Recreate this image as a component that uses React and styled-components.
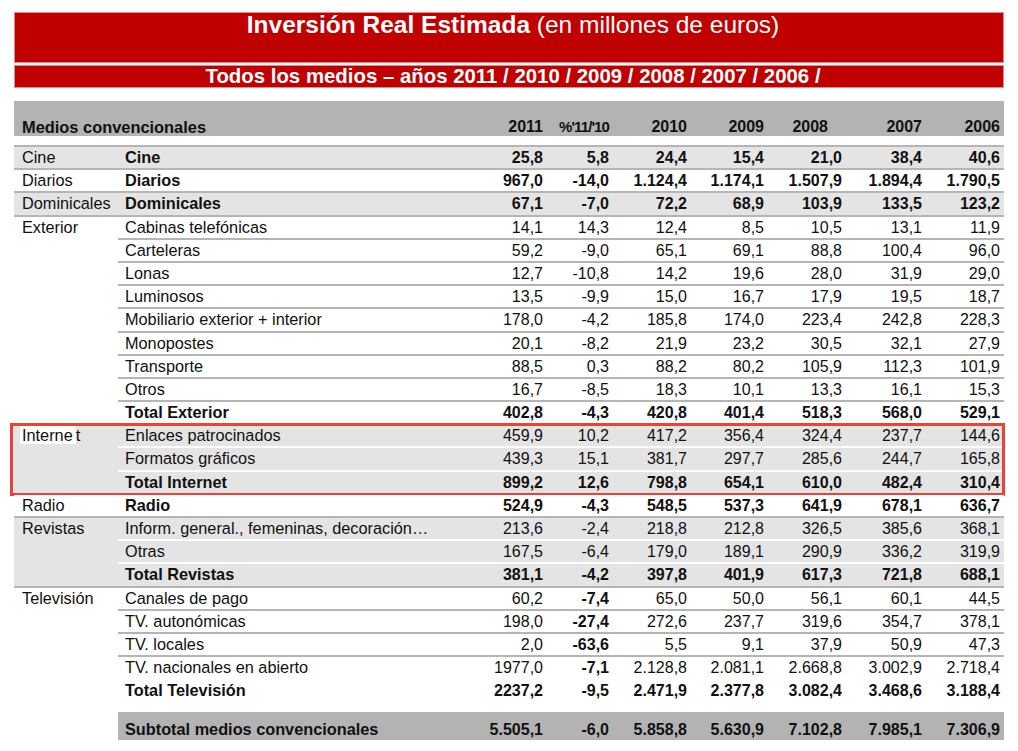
import React from 'react';
import styled, { createGlobalStyle } from 'styled-components';

const colors = {
    RED: '#c00000',
    HIGHLIGHT: '#ee4136',
    BAND: '#b3b3b3',
    SHADE: '#e4e4e4',
    LINE: '#b5b5b5',
    WHITE: '#ffffff',
    TEXT: '#111111',
};

const years = ['2011', "%'11/'10", '2010', '2009', '2008', '2007', '2006'];

const groups = [
    { cat: 'Cine', shade: true, rows: [{ name: 'Cine', bold: true, v: ['25,8', '5,8', '24,4', '15,4', '21,0', '38,4', '40,6'] }] },
    { cat: 'Diarios', rows: [{ name: 'Diarios', bold: true, v: ['967,0', '-14,0', '1.124,4', '1.174,1', '1.507,9', '1.894,4', '1.790,5'] }] },
    { cat: 'Dominicales', shade: true, rows: [{ name: 'Dominicales', bold: true, v: ['67,1', '-7,0', '72,2', '68,9', '103,9', '133,5', '123,2'] }] },
    {
        cat: 'Exterior', rows: [
            { name: 'Cabinas telefónicas', v: ['14,1', '14,3', '12,4', '8,5', '10,5', '13,1', '11,9'] },
            { name: 'Carteleras', v: ['59,2', '-9,0', '65,1', '69,1', '88,8', '100,4', '96,0'] },
            { name: 'Lonas', v: ['12,7', '-10,8', '14,2', '19,6', '28,0', '31,9', '29,0'] },
            { name: 'Luminosos', v: ['13,5', '-9,9', '15,0', '16,7', '17,9', '19,5', '18,7'] },
            { name: 'Mobiliario exterior + interior', v: ['178,0', '-4,2', '185,8', '174,0', '223,4', '242,8', '228,3'] },
            { name: 'Monopostes', v: ['20,1', '-8,2', '21,9', '23,2', '30,5', '32,1', '27,9'] },
            { name: 'Transporte', v: ['88,5', '0,3', '88,2', '80,2', '105,9', '112,3', '101,9'] },
            { name: 'Otros', v: ['16,7', '-8,5', '18,3', '10,1', '13,3', '16,1', '15,3'] },
            { name: 'Total Exterior', bold: true, v: ['402,8', '-4,3', '420,8', '401,4', '518,3', '568,0', '529,1'] },
        ]
    },
    {
        cat: 'Internet', shade: true, marked: true, rows: [
            { name: 'Enlaces patrocinados', v: ['459,9', '10,2', '417,2', '356,4', '324,4', '237,7', '144,6'] },
            { name: 'Formatos gráficos', v: ['439,3', '15,1', '381,7', '297,7', '285,6', '244,7', '165,8'] },
            { name: 'Total Internet', bold: true, v: ['899,2', '12,6', '798,8', '654,1', '610,0', '482,4', '310,4'] },
        ]
    },
    { cat: 'Radio', rows: [{ name: 'Radio', bold: true, v: ['524,9', '-4,3', '548,5', '537,3', '641,9', '678,1', '636,7'] }] },
    {
        cat: 'Revistas', shade: true, rows: [
            { name: 'Inform. general., femeninas, decoración…', v: ['213,6', '-2,4', '218,8', '212,8', '326,5', '385,6', '368,1'] },
            { name: 'Otras', v: ['167,5', '-6,4', '179,0', '189,1', '290,9', '336,2', '319,9'] },
            { name: 'Total Revistas', bold: true, v: ['381,1', '-4,2', '397,8', '401,9', '617,3', '721,8', '688,1'] },
        ]
    },
    {
        cat: 'Televisión', open: true, rows: [
            { name: 'Canales de pago', boldPct: true, v: ['60,2', '-7,4', '65,0', '50,0', '56,1', '60,1', '44,5'] },
            { name: 'TV. autonómicas', boldPct: true, v: ['198,0', '-27,4', '272,6', '237,7', '319,6', '354,7', '378,1'] },
            { name: 'TV. locales', boldPct: true, v: ['2,0', '-63,6', '5,5', '9,1', '37,9', '50,9', '47,3'] },
            { name: 'TV. nacionales en abierto', boldPct: true, noLine: true, v: ['1977,0', '-7,1', '2.128,8', '2.081,1', '2.668,8', '3.002,9', '2.718,4'] },
            { name: 'Total Televisión', bold: true, v: ['2237,2', '-9,5', '2.471,9', '2.377,8', '3.082,4', '3.468,6', '3.188,4'] },
        ]
    },
];

const subtotal = ['5.505,1', '-6,0', '5.858,8', '5.630,9', '7.102,8', '7.985,1', '7.306,9'];

const App = () => {
    return (
        <Page>
            <GlobalStyle />
            <TitleBanner>
                <Strong>Inversión Real Estimada</Strong> (en millones de euros)
            </TitleBanner>
            <SubBanner>Todos los medios – años 2011 / 2010 / 2009 / 2008 / 2007 / 2006 /</SubBanner>

            <HeaderBand>
                <HeaderLabel>Medios convencionales</HeaderLabel>
                {years.map((y, i) => (
                    <HeaderCell key={y} narrow={i === 1} shift={i === 4}>{y}</HeaderCell>
                ))}
                <span />
            </HeaderBand>

            <Body>
                {groups.map((g) => (
                    <Group key={g.cat} shade={g.shade} marked={g.marked} open={g.open}>
                        <Category>
                            {g.marked ? <><CatMark>Interne</CatMark>t</> : g.cat}
                        </Category>
                        <div>
                            {g.rows.map((r, i) => (
                                <Row
                                    key={r.name}
                                    last={i === g.rows.length - 1}
                                    noLine={r.noLine}
                                    lineColor={g.shade ? colors.WHITE : colors.LINE}
                                >
                                    <Name bold={r.bold}>{r.name}</Name>
                                    {r.v.map((val, j) => (
                                        <Num key={j} bold={r.bold || (r.boldPct && j === 1)}>{val}</Num>
                                    ))}
                                    <span />
                                </Row>
                            ))}
                        </div>
                    </Group>
                ))}
            </Body>

            <SubtotalWrap>
                <SubtotalBand>
                    <Name bold>Subtotal medios convencionales</Name>
                    {subtotal.map((val, j) => (
                        <Num key={j} bold>{val}</Num>
                    ))}
                    <span />
                </SubtotalBand>
            </SubtotalWrap>
        </Page>
    );
}

//styles
const GlobalStyle = createGlobalStyle`
    body {
        margin: 0;
        background: ${colors.WHITE};
    }
`

const NUM_COLS = '70px 66px 78px 77px 78px 80px 78px 4px';

const Page = styled.div`
    width: 990px;
    padding: 12px 14px;
    font-family: "Liberation Sans", Arial, sans-serif;
    color: ${colors.TEXT};
`

const TitleBanner = styled.div`
    height: 51px;
    background-color: ${colors.RED};
    color: ${colors.WHITE};
    font-size: 24.5px;
    line-height: 26px;
    text-align: center;
    padding-left: 8px;
    box-sizing: border-box;
    box-shadow: inset 0 0 0 1px #e98a8a;
`

const Strong = styled.span`
    font-weight: bold;
`

const SubBanner = styled.div`
    height: 23px;
    margin-top: 2px;
    background-color: ${colors.RED};
    color: ${colors.WHITE};
    font-size: 20.4px;
    font-weight: bold;
    line-height: 23px;
    text-align: center;
    padding-left: 8px;
    box-sizing: border-box;
    box-shadow: inset 0 0 0 1px #e98a8a;
`

const HeaderBand = styled.div`
    display: grid;
    grid-template-columns: 459px ${NUM_COLS};
    height: 35px;
    margin-top: 13px;
    padding-top: 17px;
    box-sizing: border-box;
    background-color: ${colors.BAND};
    font-size: 16px;
    font-weight: bold;
    line-height: 18px;
`

const HeaderLabel = styled.div`
    padding-left: 8px;
    font-size: 16.4px;
`

const HeaderCell = styled.div`
    text-align: right;
    white-space: nowrap;
    letter-spacing: ${props => props.narrow ? '-0.9px' : '0'};
    font-size: ${props => props.narrow ? '15px' : '16px'};
    padding-right: ${props => props.shift ? '14px' : '0'};
`

const Body = styled.div`
    margin-top: 9px;
    border-top: 2px solid ${colors.LINE};
`

const Group = styled.div`
    position: relative;
    display: grid;
    grid-template-columns: 104px 1fr;
    background-color: ${props => props.shade ? colors.SHADE : colors.WHITE};
    border-bottom: 2px solid ${props => props.open ? 'transparent' : colors.LINE};
    font-size: 16px;
    &::after {
        content: '';
        display: ${props => props.marked ? 'block' : 'none'};
        position: absolute;
        left: -4px;
        right: -1px;
        top: -2px;
        bottom: -3px;
        border: 3px solid ${colors.HIGHLIGHT};
        pointer-events: none;
    }
`

const Category = styled.div`
    padding-left: 8px;
    height: 21.2px;
    line-height: 21.2px;
    font-size: 16.3px;
    white-space: nowrap;
`

const CatMark = styled.span`
    background-color: ${colors.WHITE};
    padding-right: 3px;
    margin-left: -2px;
    padding-left: 2px;
`

const Row = styled.div`
    display: grid;
    grid-template-columns: 355px ${NUM_COLS};
    box-sizing: border-box;
    height: ${props => props.last ? '21.2px' : '23.2px'};
    line-height: 21.2px;
    border-bottom: ${props => props.last ? 'none' : `2px solid ${props.noLine ? 'transparent' : props.lineColor}`};
`

const Name = styled.div`
    padding-left: 7px;
    white-space: nowrap;
    font-size: 16.3px;
    font-weight: ${props => props.bold ? 'bold' : 'normal'};
`

const Num = styled.div`
    text-align: right;
    white-space: nowrap;
    font-weight: ${props => props.bold ? 'bold' : 'normal'};
`

const SubtotalWrap = styled.div`
    padding-left: 104px;
    margin-top: 8px;
`

const SubtotalBand = styled.div`
    display: grid;
    grid-template-columns: 355px ${NUM_COLS};
    height: 28px;
    padding-top: 7px;
    box-sizing: border-box;
    background-color: ${colors.BAND};
    font-size: 16px;
    line-height: 21px;
`

export default App;
